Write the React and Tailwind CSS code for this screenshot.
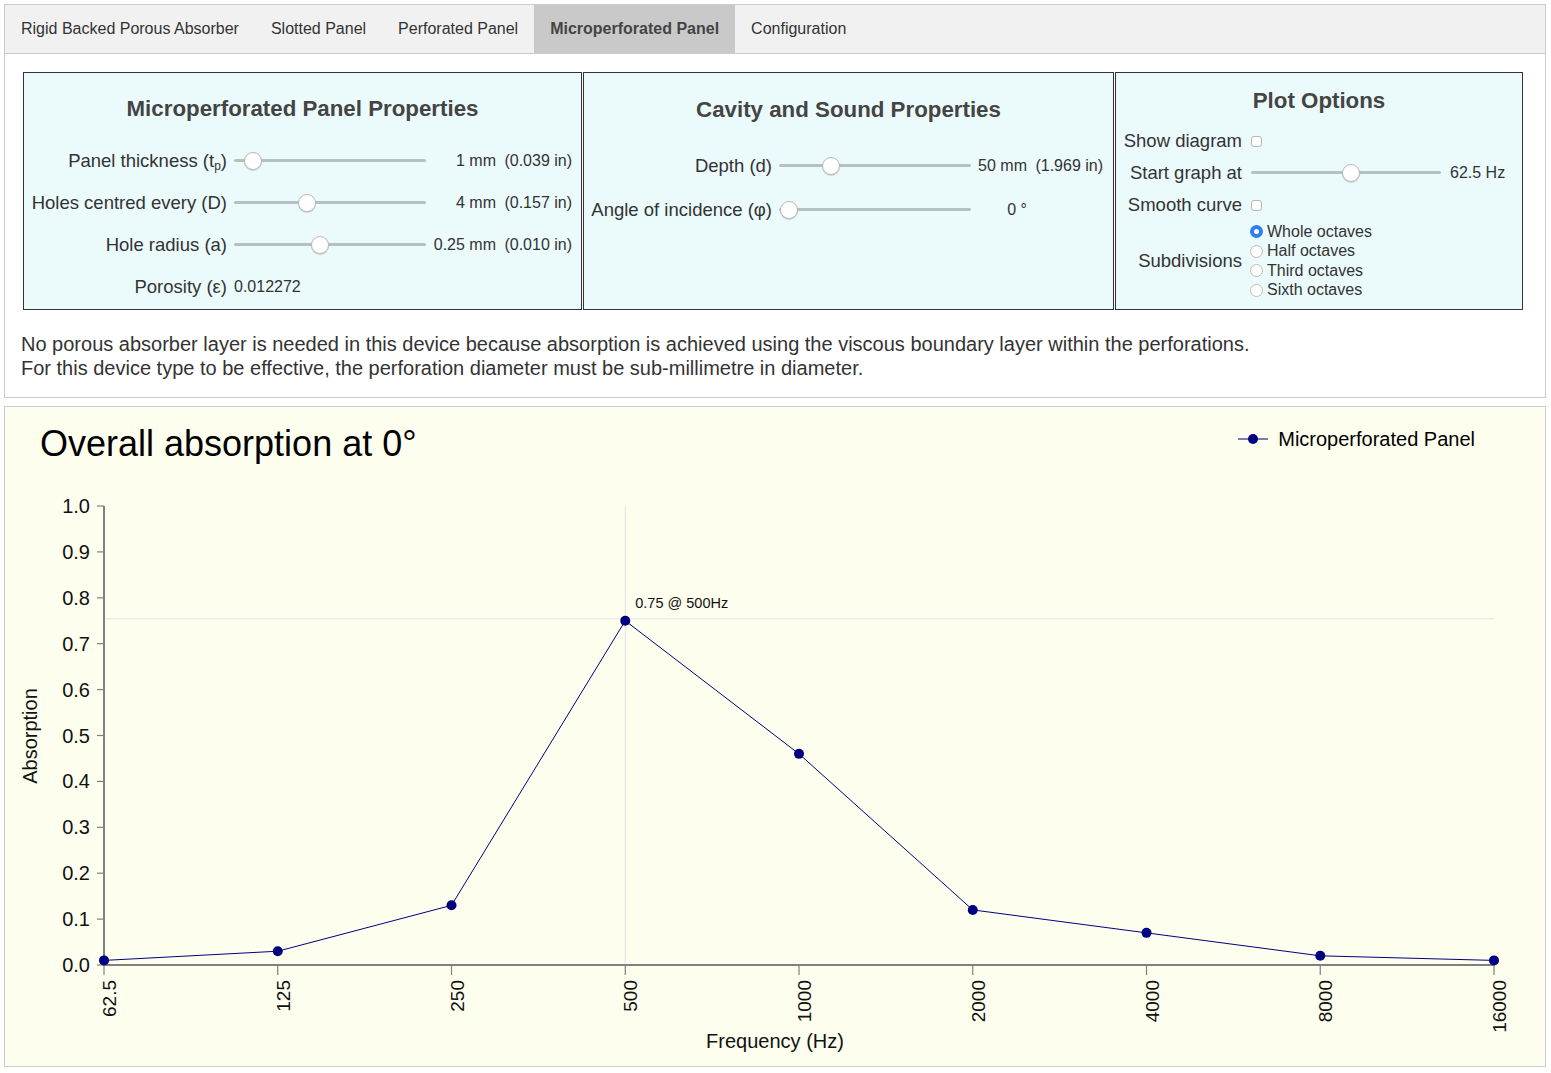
import React from 'react';

const FONT = { fontFamily: '"Liberation Sans", Arial, Helvetica, sans-serif' };

const tabs = [
  { label: 'Rigid Backed Porous Absorber' },
  { label: 'Slotted Panel' },
  { label: 'Perforated Panel' },
  { label: 'Microperforated Panel', active: true },
  { label: 'Configuration' },
];

const freqs = ['62.5', '125', '250', '500', '1000', '2000', '4000', '8000', '16000'];
const values = [0.01, 0.03, 0.13, 0.75, 0.46, 0.12, 0.07, 0.02, 0.01];

// plot geometry (svg coords)
const X0 = 99;
const DX = 173.75;
const Y0 = 498;
const PH = 459;
const px = (i) => X0 + i * DX;
const py = (v) => Y0 - v * PH;

function Slider({ className, frac, track }) {
  const left = frac * (track - 18);
  return (
    <div className={`relative h-[18px] ${className}`}>
      <div className="absolute left-0 right-0 top-[7px] h-[3px] rounded-full bg-[#b3c1c1]" />
      <div
        className="absolute top-0 h-[18px] w-[18px] rounded-full border border-[#b9b9b9] bg-white shadow-[0_1px_1px_rgba(0,0,0,0.15)]"
        style={{ left }}
      />
    </div>
  );
}

function Checkbox() {
  return <span className="inline-block h-[11px] w-[11px] rounded-[3px] border border-[#b5b5b5] bg-white" />;
}

function Radio({ checked, label }) {
  return (
    <div className="flex h-[19.5px] items-center gap-[4px] text-[16px] text-[#333]">
      {checked ? (
        <span className="flex h-[13px] w-[13px] items-center justify-center rounded-full bg-[#2f7df6]">
          <span className="h-[5px] w-[5px] rounded-full bg-white" />
        </span>
      ) : (
        <span className="h-[13px] w-[13px] rounded-full border border-[#bcbcbc] bg-white" />
      )}
      <span>{label}</span>
    </div>
  );
}

function PanelRow({ label, labelW, frac, mm, mmW, inch, h }) {
  return (
    <div className={`flex items-center ${h}`}>
      <div className={`${labelW} text-right text-[18.5px] text-[#333]`}>{label}</div>
      <Slider className="ml-[7px] w-[192px]" track={192} frac={frac} />
      <div className={`${mmW} text-right text-[16px] text-[#333]`}>{mm}</div>
      <div className="w-[76px] text-right text-[16px] text-[#333]">{inch}</div>
    </div>
  );
}

function Chart() {
  return (
    <svg width="1539" height="599" className="block">
      {/* crosshair */}
      <line x1={px(3)} y1={py(1)} x2={px(3)} y2={Y0} stroke="#e2e2e2" strokeWidth="1" />
      <line x1={X0} y1={py(0.75) - 2} x2={px(8)} y2={py(0.75) - 2} stroke="#e2e2e2" strokeWidth="1" />
      <text x={px(3) + 10} y={136} fontSize="14.5" fill="#111" dominantBaseline="central">
        0.75 @ 500Hz
      </text>

      {/* y axis */}
      <line x1={X0} y1={py(1)} x2={X0} y2={Y0 + 1} stroke="#808080" strokeWidth="2" />
      {Array.from({ length: 11 }, (_, i) => (
        <g key={i}>
          <line x1={X0 - 7} y1={py(i / 10)} x2={X0} y2={py(i / 10)} stroke="#808080" strokeWidth="1.2" />
          <text x={X0 - 14} y={py(i / 10)} fontSize="20" textAnchor="end" dominantBaseline="central" fill="#111">
            {(i / 10).toFixed(1)}
          </text>
        </g>
      ))}

      {/* x axis */}
      <line x1={X0 - 1} y1={Y0} x2={px(8)} y2={Y0} stroke="#808080" strokeWidth="2" />
      {freqs.map((f, i) => (
        <g key={f}>
          <line x1={px(i)} y1={Y0} x2={px(i)} y2={Y0 + 10} stroke="#808080" strokeWidth="1.2" />
          <text
            transform={`translate(${px(i) + 12},513) rotate(-90)`}
            fontSize="19"
            textAnchor="end"
            fill="#111"
          >
            {f}
          </text>
        </g>
      ))}

      {/* axis titles */}
      <text transform="translate(32,269) rotate(-90)" fontSize="20" textAnchor="middle" fill="#111">
        Absorption
      </text>
      <text x="770" y="581" fontSize="20" textAnchor="middle" fill="#111">
        Frequency (Hz)
      </text>

      {/* data */}
      <polyline
        points={values.map((v, i) => `${px(i)},${py(v)}`).join(' ')}
        fill="none"
        stroke="#000080"
        strokeWidth="1"
      />
      {values.map((v, i) => (
        <circle key={i} cx={px(i)} cy={py(v)} r="5" fill="#000080" />
      ))}
    </svg>
  );
}

export default function App() {
  return (
    <div className="min-h-screen bg-white pt-[4px] pb-[6px]" style={FONT}>
      <div className="ml-[4px] w-[1542px] border border-[#cccccc] bg-white">
        {/* tabs */}
        <div className="flex h-[49px] border-b border-[#cccccc] bg-[#f1f1f1]">
          {tabs.map((t) => (
            <div
              key={t.label}
              className={`flex items-center px-[16px] text-[16px] ${
                t.active ? 'bg-[#c9c9c9] font-bold text-[#444]' : 'text-[#333]'
              }`}
            >
              {t.label}
            </div>
          ))}
        </div>

        {/* panels */}
        <div className="flex gap-[1px] pl-[18px] pt-[18px]">
          <div className="h-[238px] w-[559px] border border-[#333] bg-[#ebfafb] pt-[22px]">
            <h2 className="text-center text-[22.3px] font-bold leading-[28px] text-[#444]">
              Microperforated Panel Properties
            </h2>
            <div className="mt-[17px]">
              <PanelRow
                h="h-[42px]"
                labelW="w-[203px]"
                mmW="w-[70px]"
                label={
                  <>
                    Panel thickness (t<sub className="text-[12px]">p</sub>)
                  </>
                }
                frac={0.057}
                mm="1 mm"
                inch="(0.039 in)"
              />
              <PanelRow
                h="h-[42px]"
                labelW="w-[203px]"
                mmW="w-[70px]"
                label="Holes centred every (D)"
                frac={0.368}
                mm="4 mm"
                inch="(0.157 in)"
              />
              <PanelRow
                h="h-[42px]"
                labelW="w-[203px]"
                mmW="w-[70px]"
                label="Hole radius (a)"
                frac={0.443}
                mm="0.25 mm"
                inch="(0.010 in)"
              />
              <div className="flex h-[42px] items-center">
                <div className="w-[203px] text-right text-[18.5px] text-[#333]">Porosity (ε)</div>
                <div className="ml-[7px] text-[16px] text-[#333]">0.012272</div>
              </div>
            </div>
          </div>

          <div className="h-[238px] w-[531px] border border-[#333] bg-[#ebfafb] pt-[23px]">
            <h2 className="text-center text-[22.3px] font-bold leading-[28px] text-[#444]">
              Cavity and Sound Properties
            </h2>
            <div className="mt-[20px]">
              <PanelRow
                h="h-[44px]"
                labelW="w-[188px]"
                mmW="w-[56px]"
                label="Depth (d)"
                frac={0.247}
                mm="50 mm"
                inch="(1.969 in)"
              />
              <PanelRow
                h="h-[44px]"
                labelW="w-[188px]"
                mmW="w-[56px]"
                label="Angle of incidence (φ)"
                frac={0.006}
                mm="0 °"
                inch=""
              />
            </div>
          </div>

          <div className="h-[238px] w-[408px] border border-[#333] bg-[#ebfafb] pt-[14px]">
            <h2 className="text-center text-[22.3px] font-bold leading-[28px] text-[#444]">Plot Options</h2>
            <div className="mt-[10px] text-[18.5px] text-[#333]">
              <div className="flex h-[32px] items-center">
                <div className="w-[126px] text-right">Show diagram</div>
                <div className="ml-[9px] flex items-center">
                  <Checkbox />
                </div>
              </div>
              <div className="flex h-[32px] items-center">
                <div className="w-[126px] text-right">Start graph at</div>
                <Slider className="ml-[9px] w-[190px]" track={190} frac={0.53} />
                <div className="ml-[9px] text-[16px]">62.5 Hz</div>
              </div>
              <div className="flex h-[32px] items-center">
                <div className="w-[126px] text-right">Smooth curve</div>
                <div className="ml-[9px] flex items-center">
                  <Checkbox />
                </div>
              </div>
              <div className="mt-[1px] flex items-center">
                <div className="w-[126px] text-right">Subdivisions</div>
                <div className="ml-[8px]">
                  <Radio checked label="Whole octaves" />
                  <Radio label="Half octaves" />
                  <Radio label="Third octaves" />
                  <Radio label="Sixth octaves" />
                </div>
              </div>
            </div>
          </div>
        </div>

        {/* description */}
        <div className="px-[16px] pb-[17px] pt-[22px] text-[20px] leading-[24px] text-[#333]">
          <p>
            No porous absorber layer is needed in this device because absorption is achieved using the viscous boundary
            layer within the perforations.
          </p>
          <p>For this device type to be effective, the perforation diameter must be sub-millimetre in diameter.</p>
        </div>
      </div>

      {/* chart */}
      <div className="ml-[4px] mt-[8px] w-[1542px] border border-[#cccccc] bg-[#fefeee]">
        <div className="flex h-[60px] items-start justify-between">
          <div className="pl-[35px] pt-[19px] text-[36px] leading-none text-black">Overall absorption at 0°</div>
          <div className="flex items-center gap-[10px] pr-[70px] pt-[22px]">
            <svg width="30" height="12">
              <line x1="0" y1="6" x2="30" y2="6" stroke="#7b7bb8" strokeWidth="2" />
              <circle cx="15" cy="6" r="5" fill="#000080" />
            </svg>
            <span className="text-[20px] leading-none text-black">Microperforated Panel</span>
          </div>
        </div>
        <Chart />
      </div>
    </div>
  );
}
